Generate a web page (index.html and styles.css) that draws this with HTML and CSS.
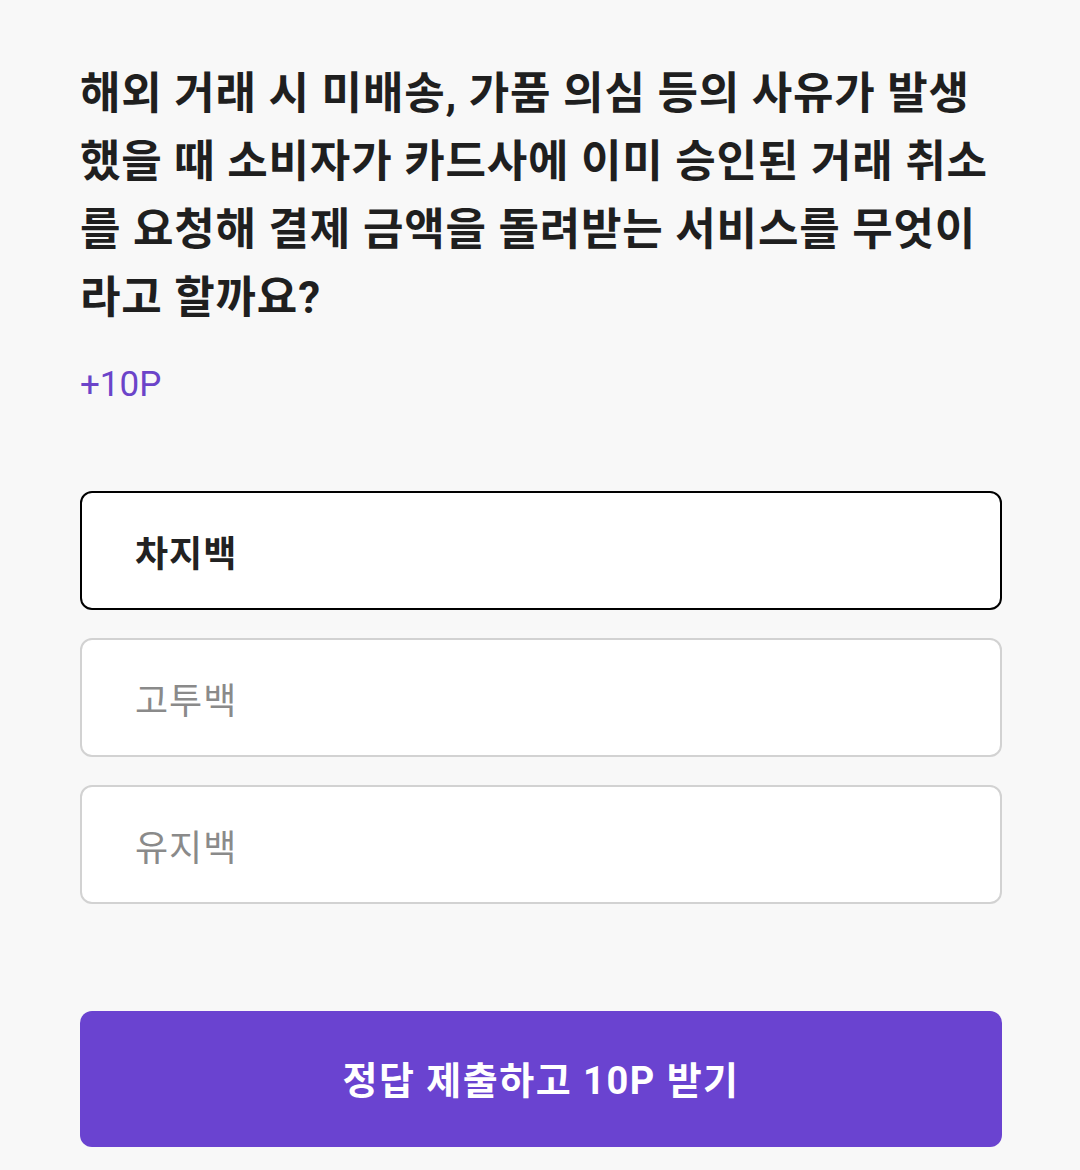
FILE: index.html
```html
<!DOCTYPE html>
<html lang="ko">
<head>
<meta charset="utf-8">
<link rel="stylesheet" href="styles.css">
</head>
<body>
<main class="quiz">
  <h1 class="question">해외 거래 시 미배송, 가품 의심 등의 사유가 발생했을 때 소비자가 카드사에 이미 승인된 거래 취소를 요청해 결제 금액을 돌려받는 서비스를 무엇이라고 할까요?</h1>
  <div class="points">+10P</div>
  <div class="options">
    <div class="option selected">차지백</div>
    <div class="option">고투백</div>
    <div class="option">유지백</div>
  </div>
  <button class="submit">정답 제출하고 10P 받기</button>
</main>
</body>
</html>
```
FILE: styles.css
```css
html, body {
  margin: 0;
  padding: 0;
  background: #f8f8f8;
}
body {
  font-family: Roboto, "Noto Sans CJK KR", sans-serif;
  color: #222;
}
.quiz {
  display: flex;
  flex-direction: column;
  padding: 60px 78px 0 80px;
}
.question {
  margin: 0;
  font-size: 44px;
  font-weight: 700;
  line-height: 68px;
  letter-spacing: 0.8px;
  color: #1f1f1f;
  word-break: break-all;
}
.points {
  margin-top: 33px;
  font-size: 35px;
  color: #6b44c9;
  line-height: 40px;
}
.options {
  display: flex;
  flex-direction: column;
  gap: 28px;
  margin-top: 86px;
}
.option {
  height: 119px;
  box-sizing: border-box;
  border: 2px solid #d2d2d2;
  border-radius: 12px;
  background: #fff;
  display: flex;
  align-items: center;
  padding-left: 53px;
  font-size: 36px;
  letter-spacing: 1px;
  color: #8a8a8a;
}
.option.selected {
  border-color: #000;
  color: #222;
  font-weight: 700;
}
.submit {
  margin-top: 107px;
  height: 136px;
  border: none;
  border-radius: 12px;
  background: #6a43d0;
  color: #fff;
  font-family: Roboto, "Noto Sans CJK KR", sans-serif;
  font-size: 38px;
  letter-spacing: 1.5px;
  font-weight: 700;
  padding-bottom: 4px;
}
```
